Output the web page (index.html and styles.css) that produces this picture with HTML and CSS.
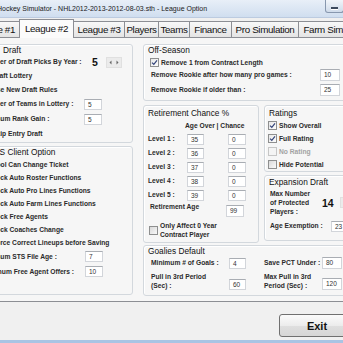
FILE: index.html
```html
<!DOCTYPE html>
<html>
<head>
<meta charset="utf-8">
<link rel="stylesheet" href="styles.css">
</head>
<body>
<div class="win">
  <div class="titlebar">
    <span class="title">Hockey Simulator - NHL2012-2013-2012-08-03.sth - League Option</span>
    <span class="minbtn"><i></i></span>
  </div>
  <div class="tabs">
    <span class="tab t1">League #1</span>
    <span class="tab sel t2">League #2</span>
    <span class="tab t3">League #3</span>
    <span class="tab t4">Players</span>
    <span class="tab t5">Teams</span>
    <span class="tab t6">Finance</span>
    <span class="tab t7">Pro Simulation</span>
    <span class="tab t8">Farm Simulation</span>
  </div>
  <div class="panel">
    <div class="col-left">
      <section class="grp draft">
        <div class="gtitle gt-draft">Draft</div>
        <div class="row h12"><span class="lbl ind w-picks">Number of Draft Picks By Year :</span><span class="big">5</span><span class="spin sp-picks"><svg width="12" height="7" viewBox="0 0 12 7"><path d="M3.5 1.5 L1.5 3.5 L3.5 5.5Z M8.5 1.5 L10.5 3.5 L8.5 5.5Z" fill="#666"/></svg></span></div>
        <div class="row h15"><span class="cb on"><svg width="7" height="7" viewBox="0 0 7 7"><path d="M1 3.6 L2.8 5.4 L6 1.3" fill="none" stroke="#34457a" stroke-width="1.2"/></svg></span><span class="lbl">Draft Lottery</span></div>
        <div class="row h14"><span class="cb on"><svg width="7" height="7" viewBox="0 0 7 7"><path d="M1 3.6 L2.8 5.4 L6 1.3" fill="none" stroke="#34457a" stroke-width="1.2"/></svg></span><span class="lbl">Use New Draft Rules</span></div>
        <div class="row h14"><span class="lbl ind w-l">Number of Teams in Lottery :</span><span class="inp">5</span></div>
        <div class="row h16"><span class="lbl ind w-l">Minimum Rank Gain :</span><span class="inp">5</span></div>
        <div class="row h14"><span class="cb"></span><span class="lbl">Skip Entry Draft</span></div>
      </section>
      <section class="grp client">
        <div class="gtitle gt-client">STHS Client Option</div>
        <div class="row h13"><span class="cb"></span><span class="lbl">Pool Can Change Ticket</span></div>
        <div class="row h13"><span class="cb"></span><span class="lbl">Lock Auto Roster Functions</span></div>
        <div class="row h13"><span class="cb"></span><span class="lbl">Lock Auto Pro Lines Functions</span></div>
        <div class="row h13"><span class="cb"></span><span class="lbl">Lock Auto Farm Lines Functions</span></div>
        <div class="row h13"><span class="cb"></span><span class="lbl">Lock Free Agents</span></div>
        <div class="row h13"><span class="cb"></span><span class="lbl">Lock Coaches Change</span></div>
        <div class="row h13"><span class="cb"></span><span class="lbl">Force Correct Lineups before Saving</span></div>
        <div class="row h15"><span class="lbl ind w-l2">Minimum STS File Age :</span><span class="inp">7</span></div>
        <div class="row h15"><span class="lbl ind w-l3">Maximum Free Agent Offers :</span><span class="inp">10</span></div>
      </section>
    </div>
    <div class="col-right">
      <section class="grp offs">
        <div class="gtitle">Off-Season</div>
        <div class="row h13"><span class="cb on"><svg width="7" height="7" viewBox="0 0 7 7"><path d="M1 3.6 L2.8 5.4 L6 1.3" fill="none" stroke="#34457a" stroke-width="1.2"/></svg></span><span class="lbl">Remove 1 from Contract Length</span></div>
        <div class="row h12"><span class="lbl ind1 w-off">Remove Rookie after how many pro games :</span><span class="inp wide">10</span></div>
        <div class="row h12 mt3"><span class="lbl ind1 w-off">Remove Rookie if older than :</span><span class="inp wide">25</span></div>
      </section>
      <div class="mid">
        <section class="grp retire">
          <div class="gtitle h14t">Retirement Chance %</div>
          <div class="row h12"><span class="lbl hdr">Age Over | Chance</span></div>
          <div class="row h14"><span class="lbl w-lvl">Level 1 :</span><span class="inp n17">35</span><span class="inp gapc">0</span></div>
          <div class="row h14"><span class="lbl w-lvl">Level 2 :</span><span class="inp n17">36</span><span class="inp gapc">0</span></div>
          <div class="row h14"><span class="lbl w-lvl">Level 3 :</span><span class="inp n17">37</span><span class="inp gapc">0</span></div>
          <div class="row h14"><span class="lbl w-lvl">Level 4 :</span><span class="inp n17">38</span><span class="inp gapc">0</span></div>
          <div class="row h14"><span class="lbl w-lvl">Level 5 :</span><span class="inp n17">39</span><span class="inp gapc">0</span></div>
          <div class="row h18 top"><span class="lbl w-ret">Retirement Age</span><span class="inp ret">99</span></div>
          <div class="row h20"><span class="cb ml1"></span><span class="lbl two">Only Affect 0 Year<br>Contract Player</span></div>
        </section>
        <div class="stack">
          <section class="grp ratings">
            <div class="gtitle h13t">Ratings</div>
            <div class="row h13"><span class="cb on"><svg width="7" height="7" viewBox="0 0 7 7"><path d="M1 3.6 L2.8 5.4 L6 1.3" fill="none" stroke="#34457a" stroke-width="1.2"/></svg></span><span class="lbl">Show Overall</span></div>
            <div class="row h13"><span class="cb on"><svg width="7" height="7" viewBox="0 0 7 7"><path d="M1 3.6 L2.8 5.4 L6 1.3" fill="none" stroke="#34457a" stroke-width="1.2"/></svg></span><span class="lbl">Full Rating</span></div>
            <div class="row h13"><span class="cb off"></span><span class="lbl dis">No Rating</span></div>
            <div class="row h13"><span class="cb"></span><span class="lbl">Hide Potential</span></div>
          </section>
          <section class="grp expansion">
            <div class="gtitle">Expansion Draft</div>
            <div class="row exp">
              <span class="lbl two w-exp">Max Number<br>of Protected<br>Players :</span>
              <span class="big">14</span>
              <span class="spin sp-exp"><svg width="12" height="7" viewBox="0 0 12 7"><path d="M3.5 1.5 L1.5 3.5 L3.5 5.5Z M8.5 1.5 L10.5 3.5 L8.5 5.5Z" fill="#666"/></svg></span>
            </div>
            <div class="row h12 mt4"><span class="lbl w-age">Age Exemption :</span><span class="inp">23</span></div>
          </section>
        </div>
      </div>
      <section class="grp goalies">
        <div class="gtitle h10t">Goalies Default</div>
        <div class="row h12 mt1">
          <span class="lbl w-g1">Minimum # of Goals :</span><span class="inp n17">4</span>
          <span class="lbl w-g2">Save PCT Under :</span><span class="inp wide">80</span>
        </div>
        <div class="row bottom mt3">
          <span class="lbl two w-g1">Pull in 3rd Period<br>(Sec) :</span><span class="inp n17">60</span>
          <span class="lbl two w-g2">Max Pull in 3rd<br>Period (Sec) :</span><span class="inp wide">120</span>
        </div>
      </section>
    </div>
  </div>
  <div class="footer"><button class="exit">Exit</button></div>
  <div class="frame"></div>
</div>
</body>
</html>
```
FILE: styles.css
```css
* { box-sizing: border-box; }
html, body { margin: 0; padding: 0; }
body {
  width: 343px; height: 343px; overflow: hidden;
  background: #f0f0f0;
  font-family: "Liberation Sans", Arial, sans-serif;
  color: #1b1b1b;
}
.win { width: 343px; height: 343px; overflow: hidden; display: flex; flex-direction: column; }

.titlebar {
  height: 18px; flex: none; display: flex; align-items: flex-start;
  background: linear-gradient(#e8eff8, #d0deef);
  border-bottom: 1px solid #bccbe0;
}
.title { font-size: 7px; line-height: 17px; margin-left: -3px; white-space: nowrap; color: #1a1a1a; }
.minbtn {
  margin-left: auto; margin-right: -1px; width: 19px; height: 13px;
  border: 1px solid #8797ae; border-top: none; border-radius: 0 0 3px 3px;
  background: linear-gradient(#f1f5fa, #cfdbea);
  display: flex; align-items: flex-end; justify-content: center; padding-bottom: 3px;
}
.minbtn i { display: block; width: 7px; height: 2px; background: #3c4a5e; box-shadow: 0 1px 0 #fff; }

.tabs {
  flex: none; height: 19px; display: flex; align-items: flex-end;
  margin-left: -32px; position: relative; z-index: 1;
}
.tab {
  flex: none; height: 16px; text-align: center;
  border: 1px solid #8c8e94; border-bottom: none; border-left: none;
  background: linear-gradient(#f8f8f8, #e4e4e4);
  font-size: 9.8px; letter-spacing: -0.35px; line-height: 15px; white-space: nowrap; color: #111;
}
.tab.sel {
  height: 19px; margin-bottom: -1px; margin-left: -1px;
  border-left: 1px solid #8c8e94;
  background: #fbfbfb; line-height: 17px;
}
.t1 { width: 52px; }
.t2 { width: 55px; }
.t3 { width: 51px; }
.t4 { width: 34px; }
.t5 { width: 31px; }
.t6 { width: 42px; }
.t7 { width: 67px; }
.t8 { width: 76px; }

.panel {
  flex: none; height: 265px; width: 420px; margin-left: -40px;
  border: 1px solid #8c8e94; background: #f6f6f6;
  display: flex; align-items: flex-start; gap: 10px;
  padding: 6px 0 0 13px;
}
.col-left { width: 159px; display: flex; flex-direction: column; gap: 3px; }
.col-right { width: 215px; display: flex; flex-direction: column; }

.grp {
  border: 1px solid #d3d8dd; border-radius: 3px;
  box-shadow: inset 1px 1px 0 #fff;
}
.draft { height: 99px; padding-left: 6px; }
.client { height: 149px; padding-left: 6px; }
.offs { height: 57px; padding-left: 6px; }
.mid { display: flex; gap: 5px; margin-top: 4px; height: 138px; }
.retire { width: 116px; height: 138px; padding-left: 4px; }
.stack { width: 94px; display: flex; flex-direction: column; gap: 3px; }
.ratings { height: 67px; padding-left: 3px; }
.expansion { height: 66px; padding-left: 5px; }
.goalies { height: 51px; margin-top: 2px; padding-left: 7px; }

.gtitle {
  font-size: 8.3px; line-height: 11px; height: 11px; white-space: nowrap;
  color: #111; margin-left: -2px; padding-left: 0;
}
.offs .gtitle { margin-left: -2px; }
.retire .gtitle { margin-left: 0; }
.ratings .gtitle { margin-left: 1px; }
.expansion .gtitle { margin-left: -1px; height: 12px; line-height: 12px; }
.goalies .gtitle { margin-left: -3px; }
.gt-draft { margin-left: 22px; }
.gt-client { margin-left: 2px; }
.h14t { height: 14px; line-height: 15px; }
.h13t { height: 13px; line-height: 14px; }
.h10t { height: 10px; line-height: 10px; }

.row { display: flex; align-items: center; white-space: nowrap; }
.row.top { align-items: flex-start; }
.row.bottom { align-items: flex-end; }
.h12 { height: 12px; }
.h13 { height: 13px; }
.h14 { height: 14px; }
.h15 { height: 15px; }
.h16 { height: 16px; }
.h18 { height: 18px; }
.h20 { height: 20px; }
.mt1 { margin-top: 1px; }
.mt3 { margin-top: 3px; }
.mt4 { margin-top: 4px; }

.lbl { font-size: 6.7px; font-weight: bold; color: #2a2a2a; line-height: 8px; flex: none; }
.lbl.two { line-height: 9px; }
.lbl.dis { color: #a2a2a2; }
.ind { margin-left: 0; }
.ind1 { margin-left: 1px; }
.w-picks { width: 111px; }
.w-l { width: 103px; }
.w-l2 { width: 104px; }
.w-l3 { width: 104px; }
.w-off { width: 169px; }
.w-lvl { width: 39px; }
.hdr { margin-left: 37px; }
.w-ret { width: 76px; margin-left: 2px; margin-top: 1px; }
.w-exp { width: 52px; }
.w-age { width: 61px; }
.w-g1 { width: 78px; }
.w-g2 { width: 58px; margin-left: 18px; }

.exp { height: 27px; margin-top: 1px; }

.cb {
  flex: none; width: 9px; height: 9px; margin-right: 2px;
  border: 1px solid #8e8f8f;
  background: linear-gradient(135deg, #d9d9d9, #f9f9f9);
  display: flex; align-items: center; justify-content: center;
}
.cb.on { background: linear-gradient(135deg, #e8e8e8, #fcfcfc); }
.cb.off { border-color: #c6c6c6; background: #f4f4f4; }
.cb svg { display: block; }
.ml1 { margin-left: 1px; }

.inp {
  flex: none; width: 18px; height: 11px;
  border: 1px solid #d2d5da; border-top-color: #a9adb3;
  background: #fff; font-size: 6.5px; line-height: 9px;
  padding-left: 3px; color: #333; overflow: hidden;
}
.inp.n17 { width: 17px; }
.inp.wide { width: 20px; height: 12px; line-height: 10px; }
.gapc { margin-left: 24px; }
.inp.ret { height: 12px; margin-top: 3px; line-height: 10px; }

.big { font-size: 10.5px; font-weight: bold; color: #111; flex: none; }
.spin {
  flex: none; width: 16px; height: 11px; background: #ebebeb;
  border: 1px solid #e0e0e0; display: flex; align-items: center; justify-content: center;
}
.sp-picks { margin-left: 8px; }
.sp-exp { margin-left: 6px; }

.footer {
  flex: none; height: 38px; display: flex; justify-content: flex-end;
  padding-top: 12px; margin-right: -12px;
}
.exit {
  width: 76px; height: 23px; margin: 0; padding: 0;
  border: 1px solid #707070; border-radius: 3px;
  background: linear-gradient(#fbfbfb, #ececec 50%, #dfdfdf 51%, #d6d6d6);
  font-family: "Liberation Sans", Arial, sans-serif;
  font-size: 11px; font-weight: bold; color: #111;
}
.frame { flex: none; height: 3px; background: #a9c4e4; }
```
